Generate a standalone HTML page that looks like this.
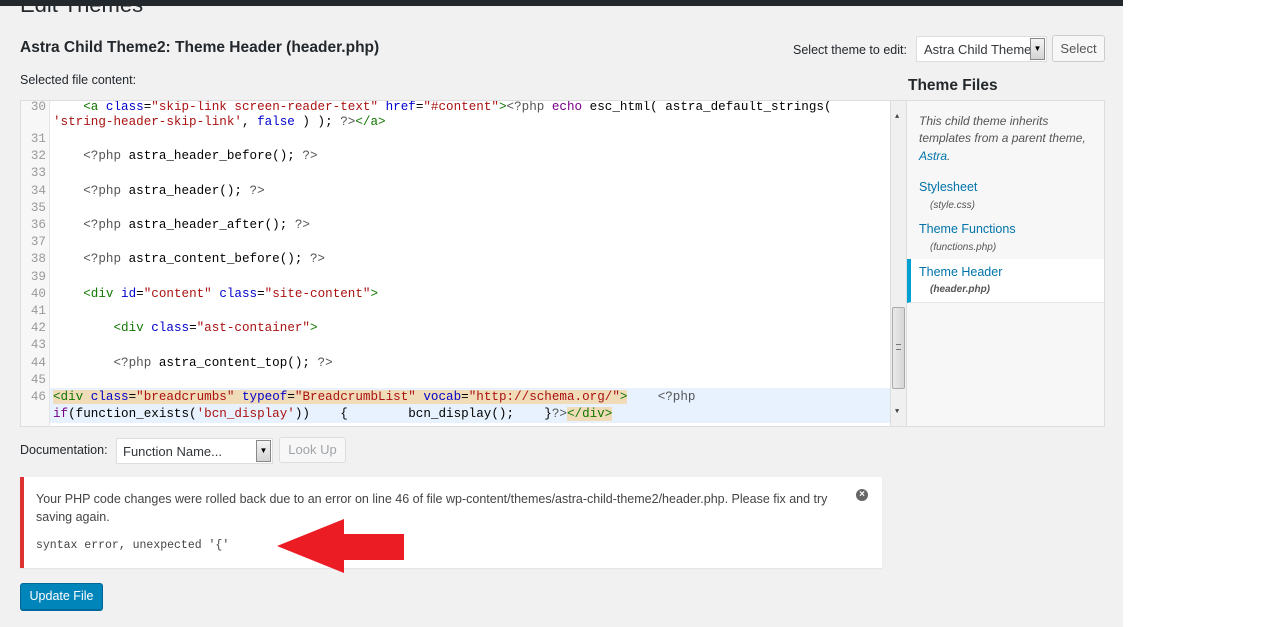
<!DOCTYPE html>
<html><head><meta charset="utf-8">
<style>
*{box-sizing:border-box;margin:0;padding:0}
body{width:1280px;height:627px;background:#fff;font-family:"Liberation Sans",sans-serif;position:relative;overflow:hidden;color:#23282d}
#gray{position:absolute;left:0;top:0;width:1123px;height:627px;background:#f1f1f1}
#bar{position:absolute;left:0;top:0;width:1123px;height:6px;background:#23282d}
.a{position:absolute;white-space:nowrap}
h1{position:absolute;left:20px;top:-8px;font-size:22px;font-weight:400;color:#23282d}
#editor{position:absolute;left:20px;top:100px;width:887px;height:327px;background:#fff;border:1px solid #ddd;overflow:hidden}
#gutter{position:absolute;left:0;top:0;width:29px;height:100%;background:#f7f7f7;border-right:1px solid #e5e5e5}
.code{font-family:"Liberation Mono",monospace;font-size:12.6px;line-height:17.2px}
.ln{position:absolute;left:0;width:25px;text-align:right;color:#999;font-family:"Liberation Mono",monospace;font-size:12.6px}
.cl{position:absolute;left:32px;white-space:pre;color:#000}
.t{color:#170}.at{color:#00c}.s{color:#a11}.k{color:#708}.p{color:#555}
#hl{position:absolute;left:29px;top:287px;width:842px;height:35px;background:#e8f2ff}
.mh{background:#f0dcb9}
#sb{position:absolute;right:0;top:0;width:16px;height:100%;background:#f0f0f0;border-left:1px solid #ddd}
#thumb{position:absolute;left:1px;top:206px;width:13px;height:82px;background:linear-gradient(90deg,#e9e9e9,#d6d6d6);border:1px solid #aaa;border-radius:2px}
#side{position:absolute;left:907px;top:100px;width:198px;height:327px;background:#f7f7f7;border:1px solid #ddd;border-left:none}
.lk{color:#0073aa;font-size:12.5px}
.sm{color:#555;font-size:10px;font-style:italic}
.btn{position:absolute;background:#f7f7f7;border:1px solid #ccc;border-radius:3px;font-size:13px;color:#555;text-align:center}
.sel{position:absolute;background:#fff;border:1px solid #ddd;font-size:13px;color:#32373c}
.dd{position:absolute;top:1px;right:1px;width:15px;bottom:1px;background:linear-gradient(#f4f4f4,#d4d4d4);border:1px solid #888;font-size:8px;text-align:center;line-height:20px;color:#000}
</style></head><body>
<div id="gray"></div><div id="bar"></div>
<h1>Edit Themes</h1>
<div class="a" style="left:20px;top:39px;font-size:15.5px;font-weight:600">Astra Child Theme2: Theme Header (header.php)</div>
<div class="a" style="left:20px;top:73px;font-size:12.5px">Selected file content:</div>
<div class="a" style="left:793px;top:43px;font-size:12.5px">Select theme to edit:</div>
<div class="sel" style="left:916px;top:36px;width:131px;height:26px;padding:5px 0 0 7px;overflow:hidden;white-space:nowrap">Astra Child Theme<div class="dd">▼</div></div>
<div class="btn" style="left:1052px;top:35px;width:53px;height:27px;line-height:25px">Select</div>
<div class="a" style="left:908px;top:77px;font-size:15.5px;font-weight:600">Theme Files</div>

<div id="editor" class="code">
<div id="gutter"></div>
<div id="hl"></div>
<div class="ln" style="top:-2px">30</div>
<div class="cl" style="top:-2px">    <span class="t">&lt;a</span> <span class="at">class</span>=<span class="s">"skip-link screen-reader-text"</span> <span class="at">href</span>=<span class="s">"#content"</span><span class="t">&gt;</span><span class="p">&lt;?php</span> <span class="k">echo</span> esc_html( astra_default_strings(</div>
<div class="cl" style="top:13px"><span class="s">'string-header-skip-link'</span>, <span class="at">false</span> ) ); <span class="p">?&gt;</span><span class="t">&lt;/a&gt;</span></div>
<div class="ln" style="top:30px">31</div>
<div class="ln" style="top:47px">32</div><div class="cl" style="top:47px">    <span class="p">&lt;?php</span> astra_header_before(); <span class="p">?&gt;</span></div>
<div class="ln" style="top:64px">33</div>
<div class="ln" style="top:82px">34</div><div class="cl" style="top:82px">    <span class="p">&lt;?php</span> astra_header(); <span class="p">?&gt;</span></div>
<div class="ln" style="top:99px">35</div>
<div class="ln" style="top:116px">36</div><div class="cl" style="top:116px">    <span class="p">&lt;?php</span> astra_header_after(); <span class="p">?&gt;</span></div>
<div class="ln" style="top:133px">37</div>
<div class="ln" style="top:150px">38</div><div class="cl" style="top:150px">    <span class="p">&lt;?php</span> astra_content_before(); <span class="p">?&gt;</span></div>
<div class="ln" style="top:168px">39</div>
<div class="ln" style="top:185px">40</div><div class="cl" style="top:185px">    <span class="t">&lt;div</span> <span class="at">id</span>=<span class="s">"content"</span> <span class="at">class</span>=<span class="s">"site-content"</span><span class="t">&gt;</span></div>
<div class="ln" style="top:202px">41</div>
<div class="ln" style="top:219px">42</div><div class="cl" style="top:219px">        <span class="t">&lt;div</span> <span class="at">class</span>=<span class="s">"ast-container"</span><span class="t">&gt;</span></div>
<div class="ln" style="top:236px">43</div>
<div class="ln" style="top:254px">44</div><div class="cl" style="top:254px">        <span class="p">&lt;?php</span> astra_content_top(); <span class="p">?&gt;</span></div>
<div class="ln" style="top:271px">45</div>
<div class="ln" style="top:288px">46</div><div class="cl" style="top:288px"><span class="mh"><span class="t">&lt;div</span> <span class="at">class</span>=<span class="s">"breadcrumbs"</span> <span class="at">typeof</span>=<span class="s">"BreadcrumbList"</span> <span class="at">vocab</span>=<span class="s">"http://schema.org/"</span><span class="t">&gt;</span></span>    <span class="p">&lt;?php</span></div>
<div class="cl" style="top:305px"><span class="k">if</span>(function_exists(<span class="s">'bcn_display'</span>))    {        bcn_display();    }<span class="p">?&gt;</span><span class="mh t">&lt;/div&gt;</span></div>
<div id="sb"><div style="position:absolute;top:8px;left:4px;font-size:7px;color:#444">▲</div><div id="thumb"><div style="position:absolute;top:36px;left:3px;width:5px;height:6px;border-top:1px solid #777;border-bottom:1px solid #777"></div></div><div style="position:absolute;bottom:5px;left:4px;font-size:7px;color:#444">▼</div></div>
</div>

<div id="side">
<div class="a" style="left:12px;top:12px;font-size:12px;font-style:italic;color:#555;line-height:17.3px;white-space:normal;width:172px">This child theme inherits templates from a parent theme, <span style="color:#0073aa">Astra</span>.</div>
<div class="a lk" style="left:12px;top:79px">Stylesheet</div>
<div class="a sm" style="left:23px;top:99px">(style.css)</div>
<div class="a lk" style="left:12px;top:121px">Theme Functions</div>
<div class="a sm" style="left:23px;top:141px">(functions.php)</div>
<div style="position:absolute;left:0;top:158px;width:197px;height:44px;background:#fff;border-left:4px solid #00a0d2;border-bottom:1px solid #e5e5e5"></div>
<div class="a lk" style="left:12px;top:164px">Theme Header</div>
<div class="a sm" style="left:23px;top:183px;font-weight:700">(header.php)</div>
</div>

<div class="a" style="left:20px;top:443px;font-size:12.5px">Documentation:</div>
<div class="sel" style="left:116px;top:438px;width:157px;height:26px;padding:5px 0 0 6px">Function Name...<div class="dd">▼</div></div>
<div class="btn" style="left:279px;top:437px;width:67px;height:26px;line-height:24px;color:#a0a5aa;border-color:#ddd">Look Up</div>

<div style="position:absolute;left:20px;top:477px;width:862px;height:91px;background:#fff;border-left:4px solid #dc3232;box-shadow:0 1px 1px rgba(0,0,0,.06)"></div>
<div class="a" style="left:36px;top:490px;font-size:12.5px;color:#444;line-height:18px;white-space:normal;width:810px">Your PHP code changes were rolled back due to an error on line 46 of file wp-content/themes/astra-child-theme2/header.php. Please fix and try saving again.</div>
<div class="a" style="left:36px;top:539px;font-family:'Liberation Mono',monospace;font-size:11.5px;color:#444">syntax error, unexpected '{'</div>
<div style="position:absolute;left:856px;top:489px;width:12px;height:12px;border-radius:50%;background:#666;color:#fff;font-size:10px;line-height:12px;text-align:center;font-weight:700">×</div>
<svg style="position:absolute;left:275px;top:518px" width="130" height="56"><polygon points="2,28 69,1 69,16 129,16 129,42 69,42 69,55" fill="#ec1c24"/></svg>

<div style="position:absolute;left:20px;top:583px;width:83px;height:27px;background:#0085ba;border:1px solid #006799;border-radius:3px;color:#fff;font-size:12.5px;text-align:center;line-height:25px;box-shadow:0 1px 0 #006799">Update File</div>
</body></html>
